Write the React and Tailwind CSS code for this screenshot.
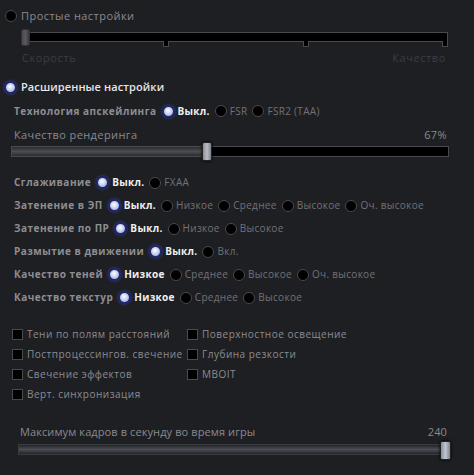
import React from 'react';

const font = { fontFamily: '"Open Sans", "DejaVu Sans", sans-serif' };

function Radio({ checked }) {
  if (checked) {
    return (
      <span className="inline-block h-[13px] w-[13px] shrink-0 rounded-full border-2 border-[#23286a] bg-[radial-gradient(circle_at_45%_40%,#ffffff_0%,#c9d3f2_45%,#8e9fd6_100%)] shadow-[0_0_3px_#3b46a8]" />
    );
  }
  return <span className="inline-block h-[12px] w-[12px] shrink-0 rounded-full border border-[#4a4a4e] bg-black" />;
}

function Check({ label }) {
  return (
    <div className="flex h-[15px] items-center gap-[4px]">
      <span className="inline-block h-[11px] w-[11px] shrink-0 border border-[#4a4a4e] bg-black" />
      <span className="text-[10px] tracking-[0.5px] text-[#8c8c90]">{label}</span>
    </div>
  );
}

function OptionRow({ label, options, selected }) {
  return (
    <div className="flex h-[23px] items-center pl-[14px]">
      <span className="mr-[5px] text-[10px] font-bold tracking-[0.5px] text-[#8e8e92]">{label}</span>
      <div className="flex items-center gap-[5px]">
        {options.map((o, i) => (
          <div key={o} className="flex items-center gap-[3px]">
            <Radio checked={i === selected} />
            <span
              className={
                i === selected
                  ? 'text-[10px] font-bold tracking-[0.3px] text-[#f0f0f2]'
                  : 'text-[10px] tracking-[0.3px] text-[#727276]'
              }
            >
              {o}
            </span>
          </div>
        ))}
      </div>
    </div>
  );
}

function Notch() {
  return <span className="block h-[6px] w-[6px] border border-t-0 border-[#4a4a4e] bg-black" />;
}

export default function App() {
  return (
    <div className="h-[475px] w-[474px] overflow-hidden bg-[#1e1f23] select-none" style={font}>
      {/* simple preset */}
      <div className="flex items-center gap-[4px] pl-[5px] pt-[8px]">
        <Radio />
        <span className="text-[11px] tracking-[0.45px] text-[#8a8a8e]">Простые настройки</span>
      </div>

      <div className="relative ml-[21px] mr-[26px] mt-[4px] h-[18px]">
        <div className="absolute left-[6px] right-0 top-[3px] h-[10px] border border-[#4a4a4e] bg-black" />
        <div className="absolute left-[142px] top-[12px]"><Notch /></div>
        <div className="absolute left-[282px] top-[12px]"><Notch /></div>
        <div className="absolute right-0 top-[12px]"><Notch /></div>
        <div className="absolute left-0 top-0 h-[17px] w-[9px] rounded-[2px] border border-[#333] bg-[linear-gradient(90deg,#4a4a4e,#5a5a5e,#3a3a3e)]" />
      </div>
      <div className="ml-[22px] mr-[28px] mt-[3px] flex justify-between text-[11px] tracking-[0.6px] text-[#3c3d42]">
        <span>Скорость</span>
        <span>Качество</span>
      </div>

      {/* advanced preset */}
      <div className="mt-[13px] flex items-center gap-[4px] pl-[4px]">
        <Radio checked />
        <span className="text-[11px] font-semibold tracking-[0.1px] text-[#e6e6ea]">Расширенные настройки</span>
      </div>

      <div className="mt-[4px]">
        <OptionRow label="Технология апскейлинга" options={['Выкл.', 'FSR', 'FSR2 (TAA)']} selected={0} />
      </div>

      <div className="mt-[4px] flex justify-between pl-[14px] pr-[27px] text-[11px] tracking-[0.4px] text-[#8a8a8e]">
        <span>Качество рендеринга</span>
        <span>67%</span>
      </div>

      <div className="relative -mt-[1px] ml-[11px] mr-[25px] h-[19px]">
        <div className="absolute left-0 right-0 top-[4px] h-[11px] border border-[#4a4a4e] bg-black" />
        <div className="absolute left-[1px] top-[5px] h-[9px] w-[192px] bg-[linear-gradient(180deg,#2a2c2e,#4a4e52_50%,#2a2c2e)]" />
        <div className="absolute left-[191px] top-0 h-[19px] w-[10px] rounded-[2px] border border-[#222] bg-[linear-gradient(90deg,#8a8e94,#b8bcc4,#7e8288)] shadow-[0_0_3px_#000]" />
      </div>

      <div className="mt-[10px]">
        <OptionRow label="Сглаживание" options={['Выкл.', 'FXAA']} selected={0} />
        <OptionRow label="Затенение в ЭП" options={['Выкл.', 'Низкое', 'Среднее', 'Высокое', 'Оч. высокое']} selected={0} />
        <OptionRow label="Затенение по ПР" options={['Выкл.', 'Низкое', 'Высокое']} selected={0} />
        <OptionRow label="Размытие в движении" options={['Выкл.', 'Вкл.']} selected={0} />
        <OptionRow label="Качество теней" options={['Низкое', 'Среднее', 'Высокое', 'Оч. высокое']} selected={0} />
        <OptionRow label="Качество текстур" options={['Низкое', 'Среднее', 'Высокое']} selected={0} />
      </div>

      <div className="mt-[18px] grid grid-cols-[175px_1fr] gap-y-[5px] pl-[12px]">
        <Check label="Тени по полям расстояний" />
        <Check label="Поверхностное освещение" />
        <Check label="Постпроцессингов. свечение" />
        <Check label="Глубина резкости" />
        <Check label="Свечение эффектов" />
        <Check label="MBOIT" />
        <Check label="Верт. синхронизация" />
      </div>

      <div className="mt-[22px] flex justify-between pl-[20px] pr-[27px] text-[11px] tracking-[0.1px] text-[#8a8a8e]">
        <span>Максимум кадров в секунду во время игры</span>
        <span>240</span>
      </div>
      <div className="relative ml-[18px] mr-[23px] h-[19px]">
        <div className="absolute left-0 right-[6px] top-[3px] h-[11px] border border-[#3a3c40] bg-[linear-gradient(180deg,#222428,#4a4e54_50%,#222428)]" />
        <div className="absolute right-0 top-0 h-[19px] w-[11px] rounded-[2px] border border-[#222] bg-[linear-gradient(90deg,#8a909a,#c0c6d0,#7e848e)] shadow-[0_0_3px_#000]" />
      </div>
    </div>
  );
}
